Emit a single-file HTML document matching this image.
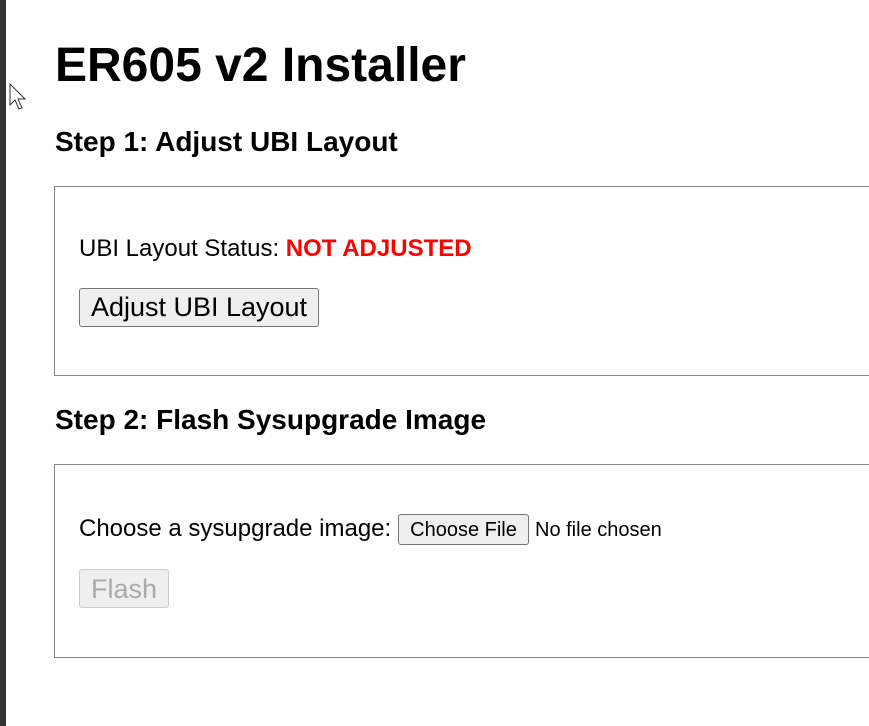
<!DOCTYPE html>
<html><head><style>
body{margin:0;width:869px;height:726px;background:#fff;font-family:"Liberation Sans",Arial,sans-serif;position:relative;overflow:hidden}
.strip{position:absolute;left:0;top:0;width:6px;height:726px;background:#333}
.a{position:absolute;white-space:nowrap}
h1{position:absolute;left:55px;top:36px;margin:0;font-size:48px;line-height:60px;font-weight:bold}
h2{position:absolute;margin:0;font-size:28px;font-weight:bold;line-height:32px;left:55px}
.box{position:absolute;left:54px;width:830px;border:1px solid #888;box-sizing:border-box}
.btn{position:absolute;box-sizing:border-box;border:1px solid #767676;border-radius:3px;background:#efefef;text-align:center;color:#000;white-space:nowrap}
</style></head><body>
<div class="strip"></div>
<svg class="a" style="left:9px;top:83px" width="20" height="28" viewBox="0 0 20 28"><path d="M1 1 L1 22 L6 17 L10 26 L13 25 L9 16 L16 16 Z" fill="#fff" stroke="#333" stroke-width="1"/></svg>
<h1>ER605 v2 Installer</h1>
<h2 style="top:126px">Step 1: Adjust UBI Layout</h2>
<div class="box" style="top:186px;height:190px"></div>
<div class="a" style="left:79px;top:235px;font-size:24px;line-height:28px">UBI Layout Status: <b style="color:#f00">NOT ADJUSTED</b></div>
<div class="btn" style="left:79px;top:288px;width:240px;height:39px;font-size:27px;line-height:37px">Adjust UBI Layout</div>
<h2 style="top:404px">Step 2: Flash Sysupgrade Image</h2>
<div class="box" style="top:464px;height:194px"></div>
<div class="a" style="left:79px;top:515px;font-size:24px;line-height:28px">Choose a sysupgrade image:</div>
<div class="btn" style="left:398px;top:514px;width:131px;height:31px;font-size:20px;line-height:30px">Choose File</div>
<div class="a" style="left:535px;top:518px;font-size:20px;line-height:24px">No file chosen</div>
<div class="btn" style="left:79px;top:569px;width:90px;height:39px;font-size:27px;line-height:38px;color:#aaa;border-color:#ccc;background:#efefef">Flash</div>
</body></html>
